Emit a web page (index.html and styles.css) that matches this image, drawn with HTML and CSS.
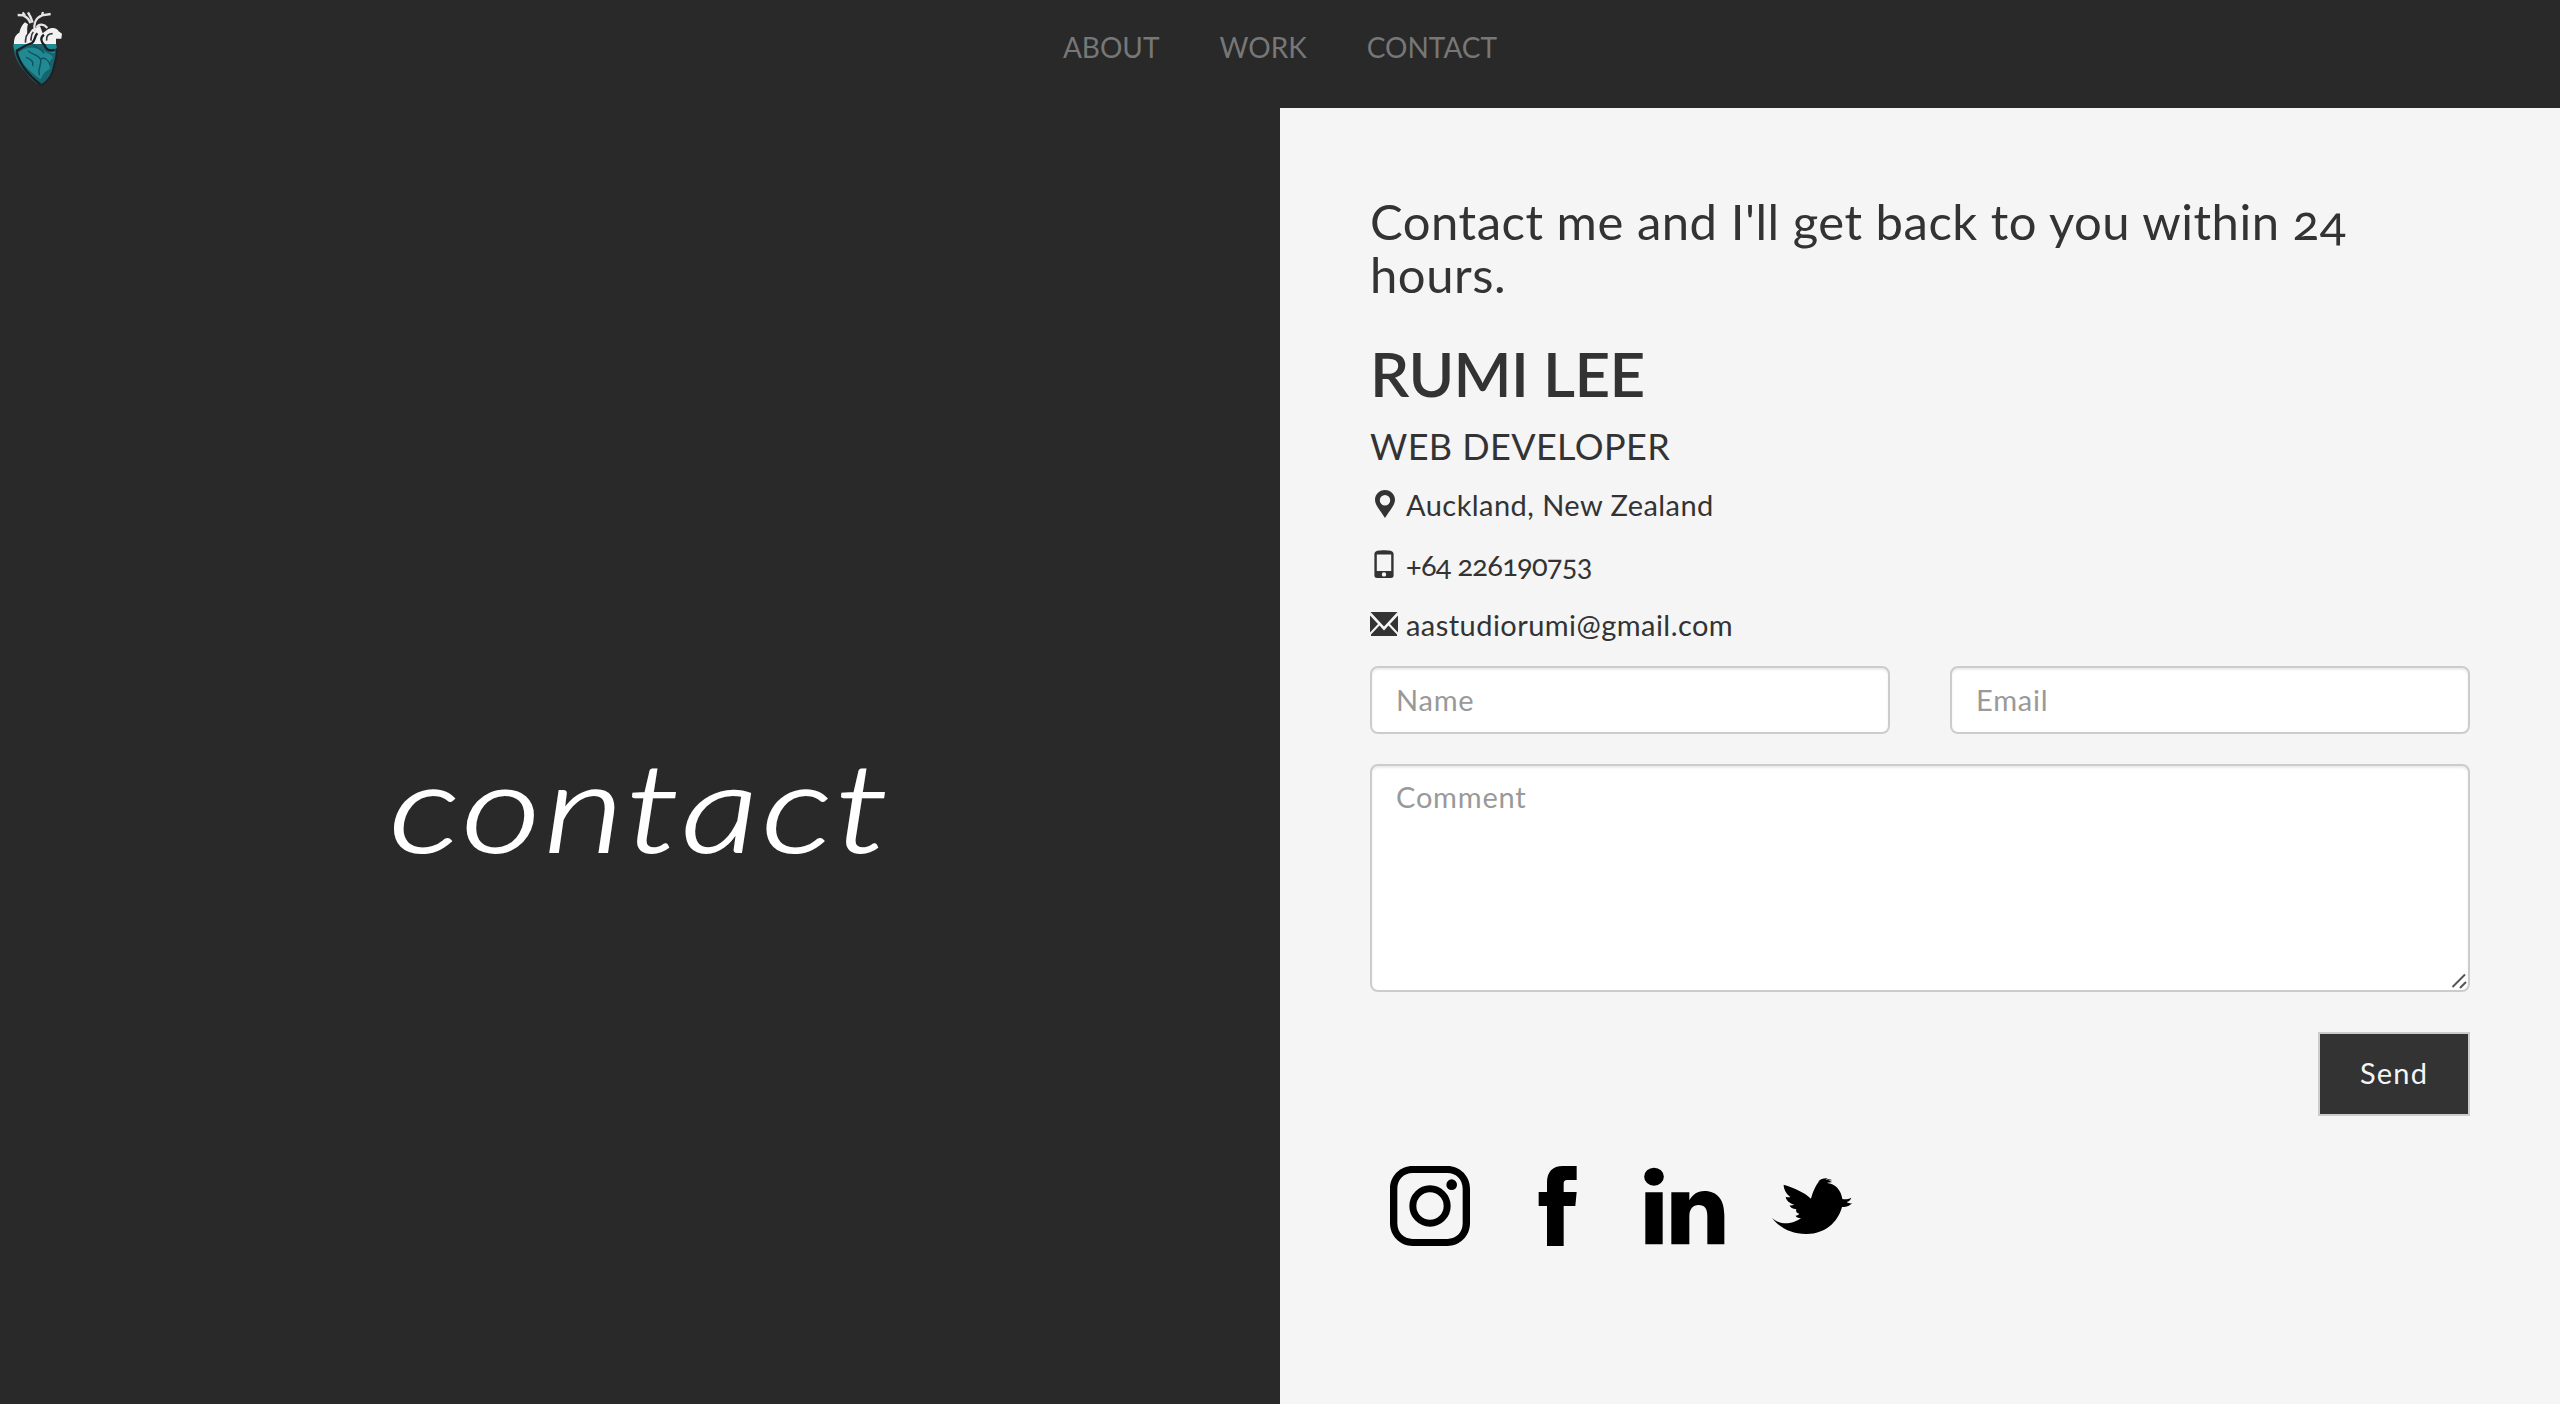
FILE: index.html
```html
<!DOCTYPE html>
<html lang="en">
<head>
<meta charset="utf-8">
<title>Contact</title>
<link rel="stylesheet" href="styles.css">
</head>
<body>
<header class="navbar">
  <svg class="logo" viewBox="0 0 240 330" aria-label="Heart logo">
    <path d="M42 134C41 116 46 104 58 98C61 86 66 74 75 67L84 73C79 86 84 96 80 108L88 100L96 88L120 78L128 100L144 88C158 80 172 84 176 94L186 101L184 116H168V140L100 150L42 145z" fill="#f3f1f1"/>
    <path d="M53 45L70 46C82 52 88 58 91 70M68 37L75 47M84 37L92 52L98 68M104 94C100 74 106 54 126 46L129 36M126 46L152 42M110 82C118 70 132 72 142 84" fill="none" stroke="#e6e3e3" stroke-width="7"/>
    <path d="M40 132H168C174 148 170 168 164 190C160 218 146 244 126 256C104 252 90 234 74 214C52 190 40 164 40 132z" fill="#17646f"/>
    <path d="M40 132H92L58 152L48 158C43 150 40 142 40 132zM136 132H168C171 142 169 156 162 160C148 160 136 148 136 132z" fill="#1f8b94"/>
    <path d="M54 160C70 144 94 140 112 146C134 154 154 162 160 174C150 178 146 190 150 206C138 212 128 222 122 238C98 220 64 196 54 160z" fill="#218993"/>
    <path d="M48 154C62 146 72 136 96 129C106 122 103 110 112 100M50 156C58 190 86 226 122 254M132 104C120 112 122 126 134 136C138 148 148 154 164 150" fill="none" stroke="#171f22" stroke-width="7"/>
    <path d="M82 104C75 110 78 120 76 128M100 96C92 104 95 114 92 122M158 101C146 101 138 106 140 122" fill="none" stroke="#38383b" stroke-width="5"/>
    <path d="M84 152C96 166 112 160 122 178C126 194 112 206 118 226M122 178C132 170 144 178 150 194M78 172C90 176 102 184 98 198M100 136C116 144 126 148 132 160" fill="none" stroke="#0e525d" stroke-width="4"/>
    <path d="M124 256C146 244 160 218 164 190C170 172 172 158 168 146" fill="none" stroke="#1c2226" stroke-width="6"/>
  </svg>
  <nav class="menu">
    <a class="menu-link">ABOUT</a>
    <a class="menu-link">WORK</a>
    <a class="menu-link">CONTACT</a>
  </nav>
</header>
<main class="page">
  <section class="cover"><h1 class="script">contact</h1></section>
  <section class="details">
    <h2 class="lead">Contact me and I'll get back to you within 24 hours.</h2>
    <h3 class="name">RUMI LEE</h3>
    <h4 class="role">WEB DEVELOPER</h4>
    <p class="item">
      <svg class="glyph" viewBox="0 0 28 28"><path fill-rule="evenodd" d="M15 0C9.200 0 5 4.500 5 10c0 5 5 10 10 18c5-8 10-13 10-18C25 4.500 20.800 0 15 0zM15 5a5.200 5.200 0 1 1 0 10.400a5.200 5.200 0 0 1 0-10.400z"/></svg>
      <span>Auckland, New Zealand</span>
    </p>
    <p class="item">
      <svg class="glyph" viewBox="0 0 28 28"><path fill-rule="evenodd" d="M7.500 .8C11 0 17 0 20.500 .8C22.500 1.200 23.600 2.500 23.600 4V25.500C23.600 27 22.800 28 21 28H7C5.200 28 4.400 27 4.400 25.500V4C4.400 2.500 5.500 1.200 7.500 .8zM6.800 4.500V21H21.200V4.500zM14 22.200a2.200 2.200 0 1 0 0 4.400a2.200 2.200 0 0 0 0-4.400z"/></svg>
      <span class="phone">+64 226190753</span>
    </p>
    <p class="item">
      <svg class="glyph" viewBox="0 0 28 28"><path d="M.5 2H27.500L14 16.500zM0 5.500L8 14L0 22.500zM28 5.500V22.500L20 14zM9.500 15.600L14 20.500L18.500 15.600L27 24.500V26H1V24.500z"/></svg>
      <span>aastudiorumi@gmail.com</span>
    </p>
    <form class="form">
      <div class="pair">
        <input class="field" type="text" placeholder="Name">
        <input class="field" type="text" placeholder="Email">
      </div>
      <div class="comment">
        <textarea class="field area" placeholder="Comment"></textarea>
        <svg class="grip" viewBox="0 0 16 16"><path d="M1.500 14L14 1.500M9 15L15 9"/></svg>
      </div>
      <button class="send" type="button">Send</button>
    </form>
    <div class="social">
      <svg viewBox="120 78 240 240"><path fill-rule="evenodd" d="M188 78H292C330 78 360 108 360 146V250C360 288 330 318 292 318H188C150 318 120 288 120 250V146C120 108 150 78 188 78zM188 99C161 99 142 119 142 146V250C142 277 161 297 188 297H292C319 297 338 277 338 250V146C338 119 319 99 292 99z"/><circle cx="240" cy="198" r="51.500" fill="none" stroke="#000" stroke-width="21"/><circle cx="305" cy="134" r="16"/></svg>
      <svg viewBox="502 78 240 240"><path d="M592 318V198H567V156H592V128C592 96 608 78 640 78H681V120H652C645 120 642 124 642 131V156H681L677 198H642V318z"/></svg>
      <svg viewBox="884 78 240 240"><ellipse cx="911" cy="110" rx="29.500" ry="27"/><path d="M885 157H937V313H885zM963 157H1017V181C1027 164 1040 153 1062 153C1102 153 1122 180 1122 225V313H1071V228C1071 206 1063 195 1045 195C1027 195 1017 208 1017 229V313H963z"/></svg>
      <svg viewBox="1266 78 240 240"><path d="M1266 233C1282 249 1302 252 1319 249C1333 247 1344 241 1353 234C1344 234 1338 231 1337 227C1342 226 1346 224 1348 221C1339 219 1337 215 1339 208C1328 207 1320 203 1319 196C1323 197 1329 196 1333 194C1319 190 1308 181 1307 170C1312 172 1317 172 1321 171C1309 161 1301 148 1301 134C1334 144 1363 157 1383 176C1388 157 1398 132 1411 121C1409 122 1406 124 1403 127C1408 118 1420 114 1434 115C1431 116 1428 118 1427 120C1432 117 1440 117 1447 121C1441 120 1437 122 1435 123C1440 123 1444 124 1446 127C1441 126 1435 127 1431 129C1456 131 1473 150 1477 177C1486 179 1496 177 1504 173C1502 180 1497 184 1490 186C1496 190 1501 191 1506 190C1500 198 1488 202 1476 201C1463 248 1425 281 1371 282C1325 283 1286 262 1266 233z"/></svg>
    </div>
  </section>
</main>
</body>
</html>
```
FILE: styles.css
```css
* { box-sizing: border-box; }

body {
  margin: 0;
  height: 1404px;
  overflow: hidden;
  background: #292929;
  color: #333;
  font: 28px/40px Lato, sans-serif;
  font-variant-numeric: oldstyle-nums;
}

h1, h2, h3, h4, p { margin: 0; font-weight: 400; }

/* Navigation */
.navbar {
  height: 108px;
  display: grid;
  grid-template-columns: 1fr auto 1fr;
  align-items: start;
  background: #292929;
}
.logo { width: 80px; height: 110px; }
.menu { display: flex; gap: 60px; padding-top: 27px; }
.menu-link { color: #777; }

/* Two halves */
.page { display: grid; grid-template-columns: 1fr 1fr; height: 1296px; }
.cover { display: flex; justify-content: center; align-items: center; padding-top: 98px; }
.script {
  color: #fff;
  font-size: 122px;
  line-height: 144px;
  font-style: italic;
  font-weight: 300;
  letter-spacing: 3px;
  transform: scaleX(1.26);
  -webkit-text-stroke: 1.8px #fff;
}
.details { background: #f5f5f5; padding: 87px 90px 0; }

.lead { font-size: 49px; line-height: 53px; letter-spacing: .52px; padding-right: 100px; }
.name { margin-top: 38px; font-size: 62px; line-height: 68px; font-weight: 600; letter-spacing: -.65px; }
.role { margin-top: 19px; font-size: 36px; line-height: 40px; letter-spacing: .4px; }

.item { display: flex; gap: 8px; margin-top: 20px; font-size: 29px; letter-spacing: .45px; }
.role + .item { margin-top: 19px; }
.phone { letter-spacing: -.75px; }
.glyph { width: 28px; height: 28px; margin-top: 5px; fill: #333; }

/* Form */
.form { margin-top: 21px; display: flex; flex-direction: column; }
.pair { display: grid; grid-template-columns: 1fr 1fr; gap: 60px; }
.field {
  display: block;
  width: 100%;
  height: 68px;
  padding: 0 24px 2px;
  border: 2px solid #ccc;
  border-radius: 8px;
  background: #fff;
  box-shadow: inset 0 2px 2px rgba(0, 0, 0, .075);
  font: inherit;
  font-size: 29px;
  letter-spacing: .8px;
  color: #555;
  outline: none;
}
.field::placeholder { color: #999; opacity: 1; }
.comment { position: relative; margin-top: 30px; }
.area { height: 228px; padding-top: 11px; resize: none; }
.grip {
  position: absolute;
  right: 3px;
  bottom: 3px;
  width: 16px;
  height: 16px;
  fill: none;
  stroke: #555;
  stroke-width: 2;
}
.send {
  align-self: flex-end;
  margin-top: 40px;
  width: 152px;
  height: 84px;
  padding: 0 0 2px;
  border: 2px solid #ccc;
  background: #333;
  color: #f5f5f5;
  font: inherit;
  font-size: 29px;
  letter-spacing: 1.2px;
}

/* Social links */
.social { display: flex; gap: 47.330px; margin: 50px 0 0 20px; }
.social svg { width: 80px; height: 80px; overflow: visible; }
```
